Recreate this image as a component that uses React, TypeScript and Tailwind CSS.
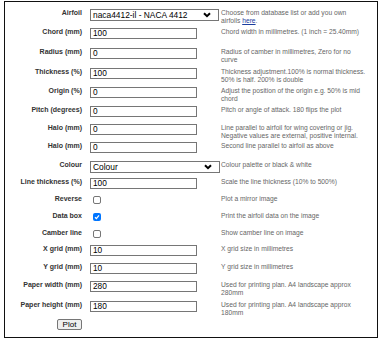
import type { ReactNode } from "react";

const font = { fontFamily: '"Liberation Sans", Arial, sans-serif' };

function Chevron() {
  return (
    <svg width="8" height="6" viewBox="0 0 8 6" className="shrink-0">
      <polyline points="1,1.2 4,4.2 7,1.2" fill="none" stroke="#000" strokeWidth="2" />
    </svg>
  );
}

function Select({ value, w }: { value: string; w: string }) {
  return (
    <div className={`${w} h-[12px] border border-[#767676] bg-white flex items-center justify-between pl-[2px] pr-[7px] text-[8.4px] leading-none text-black`}>
      <span>{value}</span>
      <Chevron />
    </div>
  );
}

function Field({ value }: { value: string }) {
  return (
    <div className="w-[107px] h-[11px] border border-[#767676] bg-white flex items-center pl-[2px] text-[8.3px] leading-none text-black">
      {value}
    </div>
  );
}

function Check({ on }: { on?: boolean }) {
  return on ? (
    <div className="ml-[3px] mt-[1px] w-[8px] h-[8px] rounded-[2px] bg-[#0075ff] flex items-center justify-center">
      <svg width="6" height="6" viewBox="0 0 6 6">
        <polyline points="1,3.2 2.4,4.6 5,1.4" fill="none" stroke="#fff" strokeWidth="1.3" />
      </svg>
    </div>
  ) : (
    <div className="ml-[3px] mt-[1px] w-[8px] h-[8px] rounded-[2px] border border-[#767676] bg-white" />
  );
}

function Row({ label, h, children, desc }: { label: string; h: string; children: ReactNode; desc?: ReactNode }) {
  return (
    <div className={`flex items-start ${h}`}>
      <div className="w-[79px] pr-[2px] text-right text-[7px] leading-[8px] font-bold text-[#333]">{label}</div>
      <div className="w-[137px] pl-[6px]">{children}</div>
      <div className="w-[145px] text-[6.7px] leading-[8px] text-[#666]">{desc}</div>
    </div>
  );
}

export default function App() {
  return (
    <div className="w-[384px] h-[344px] bg-white pt-[1px] pl-[4px]" style={font}>
      <div className="w-[374px] h-[337px] border border-[#111] pt-[7px]">
        <Row
          label="Airfoil"
          h="h-[19px]"
          desc={
            <>
              Choose from database list or add you own airfoils <a className="text-[#1a3d9e] underline">here</a>.
            </>
          }
        >
          <Select value="naca4412-il - NACA 4412" w="w-[129px]" />
        </Row>
        <Row label="Chord (mm)" h="h-[20px]" desc="Chord width in millimetres. (1 inch = 25.40mm)">
          <Field value="100" />
        </Row>
        <Row label="Radius (mm)" h="h-[20px]" desc="Radius of camber in millimetres, Zero for no curve">
          <Field value="0" />
        </Row>
        <Row label="Thickness (%)" h="h-[19px]" desc="Thickness adjustment.100% is normal thickness. 50% is half. 200% is double">
          <Field value="100" />
        </Row>
        <Row label="Origin (%)" h="h-[19px]" desc="Adjust the position of the origin e.g. 50% is mid chord">
          <Field value="0" />
        </Row>
        <Row label="Pitch (degrees)" h="h-[18px]" desc="Pitch or angle of attack. 180 flips the plot">
          <Field value="0" />
        </Row>
        <Row label="Halo (mm)" h="h-[18px]" desc="Line parallel to airfoil for wing covering or jig. Negative values are external, positive internal.">
          <Field value="0" />
        </Row>
        <Row label="Halo (mm)" h="h-[19px]" desc="Second line parallel to airfoil as above">
          <Field value="0" />
        </Row>
        <Row label="Colour" h="h-[17px]" desc="Colour palette or black & white">
          <Select value="Colour" w="w-[130px]" />
        </Row>
        <Row label="Line thickness (%)" h="h-[17px]" desc="Scale the line thickness (10% to 500%)">
          <Field value="100" />
        </Row>
        <Row label="Reverse" h="h-[17px]" desc="Plot a mirror image">
          <Check />
        </Row>
        <Row label="Data box" h="h-[17px]" desc="Print the airfoil data on the image">
          <Check on />
        </Row>
        <Row label="Camber line" h="h-[16px]" desc="Show camber line on image">
          <Check />
        </Row>
        <Row label="X grid (mm)" h="h-[18px]" desc="X grid size in millimetres">
          <Field value="10" />
        </Row>
        <Row label="Y grid (mm)" h="h-[18px]" desc="Y grid size in millimetres">
          <Field value="10" />
        </Row>
        <Row label="Paper width (mm)" h="h-[20px]" desc="Used for printing plan. A4 landscape approx 280mm">
          <Field value="280" />
        </Row>
        <Row label="Paper height (mm)" h="h-[18px]" desc="Used for printing plan. A4 landscape approx 180mm">
          <Field value="180" />
        </Row>
        <div className="flex">
          <div className="w-[79px] flex justify-end pr-[2px]">
            <button className="w-[25px] h-[11px] border border-[#767676] rounded-[2px] bg-[#efefef] text-[8px] leading-none text-black flex items-center justify-center">
              Plot
            </button>
          </div>
        </div>
      </div>
    </div>
  );
}
